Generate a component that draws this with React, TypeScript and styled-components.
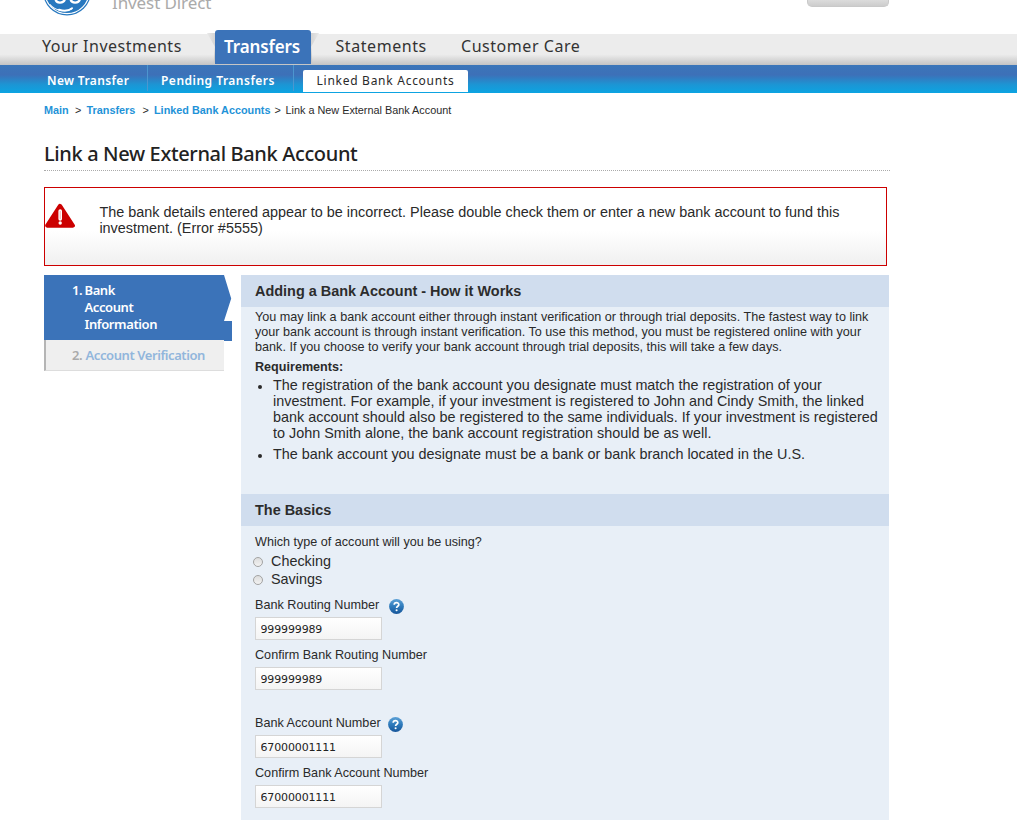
import React from "react";
import styled, { createGlobalStyle } from "styled-components";

const humanist = `"Noto Sans", "Open Sans", sans-serif`;
const grotesque = `"Liberation Sans", Arial, sans-serif`;

const GlobalStyle = createGlobalStyle`
  html, body { margin: 0; padding: 0; background: #fff; }
  body { height: 820px; overflow: hidden; font-family: ${grotesque}; color: #2a2a2a; }
  * { box-sizing: border-box; }
`;

const Page = styled.div`
  width: 1017px;
  height: 820px;
  overflow: hidden;
`;

const Masthead = styled.header`
  display: flex;
  justify-content: space-between;
  height: 34px;
  padding: 0 128px 0 43px;
`;

const Brand = styled.div`
  display: flex;
  gap: 21px;
  svg { display: block; flex: none; }
`;

const BrandName = styled.div`
  font: 400 17px/24px ${humanist};
  letter-spacing: -0.1px;
  color: #aaa;
  margin-top: -9px;
  white-space: nowrap;
`;

const HeaderButton = styled.div`
  width: 82px;
  height: 7px;
  background: linear-gradient(#dcdcdc, #cdcdcd);
  border: 1px solid #c9c9c9;
  border-top: 0;
  border-radius: 0 0 5px 5px;
`;

const MainNav = styled.nav`
  display: flex;
  height: 31px;
  padding-left: 42px;
  background: linear-gradient(#ececec 0 66%, #c4c4c4 100%);
`;

const MainLink = styled.a<{ $w: number; $pad?: number; $track: string }>`
  width: ${(p) => p.$w}px;
  padding-left: ${(p) => p.$pad ?? 0}px;
  font: 400 16px/25px ${humanist};
  letter-spacing: ${(p) => p.$track};
  color: #333;
  white-space: nowrap;
`;

const TabEar = styled.svg`
  display: block;
  flex: none;
  margin-top: -1px;
`;

const MainTab = styled.a`
  width: 96px;
  height: 34px;
  margin-top: -4px;
  padding-left: 9px;
  border-radius: 3px 3px 0 0;
  background: #3b73b9;
  color: #fff;
  font: 600 17px/33px ${humanist};
  letter-spacing: -0.1px;
  white-space: nowrap;
`;

const SubNav = styled.nav`
  display: flex;
  height: 28px;
  background: linear-gradient(#3b76b9 0%, #3d70b8 35%, #1c95d4 70%, #0ca4e2 100%);
`;

const SubLink = styled.a<{ $w: number; $pad: number; $track: string }>`
  width: ${(p) => p.$w}px;
  height: 26px;
  padding-left: ${(p) => p.$pad}px;
  border-right: 1px solid #4c96cf;
  color: #fff;
  font: 600 12px/32px ${humanist};
  letter-spacing: ${(p) => p.$track};
  white-space: nowrap;
`;

const SubTab = styled.a`
  width: 165px;
  height: 22px;
  margin: 5px 0 0 9px;
  background: #fff;
  border-radius: 2px 2px 0 0;
  text-align: center;
  font: 400 12px/22px ${humanist};
  letter-spacing: 0.73px;
  white-space: nowrap;
`;

const Content = styled.main`
  width: 846px;
  margin-left: 44px;
`;

const Breadcrumbs = styled.div`
  display: flex;
  height: 35px;
  font-size: 10.85px;
  line-height: 35px;
  white-space: nowrap;
`;

const Crumb = styled.a<{ $w: number }>`
  width: ${(p) => p.$w}px;
  color: #1f93d8;
  font-weight: 700;
`;

const CrumbMark = styled.span<{ $w: number }>`
  width: ${(p) => p.$w}px;
`;

const Title = styled.h1`
  margin: 0;
  height: 43px;
  border-bottom: 1px dotted #aaa;
  font: 500 20px/51px ${humanist};
  letter-spacing: -0.36px;
  color: #222;
  white-space: nowrap;
`;

const Alert = styled.div`
  display: flex;
  width: 843px;
  height: 79px;
  margin-top: 16px;
  padding-top: 15px;
  border: 1px solid #c00;
  background: linear-gradient(#fff 55%, #f0f0f0);
  svg { display: block; flex: none; }
`;

const AlertText = styled.div`
  margin: 1px 0 0 24.4px;
  font-size: 14.42px;
  line-height: 16px;
`;

const Line = styled.div`
  white-space: nowrap;
`;

const Columns = styled.div`
  display: flex;
  margin-top: 9px;
`;

const Steps = styled.aside`
  width: 197px;
`;

const CurrentStep = styled.div`
  position: relative;
  display: flex;
  width: 180px;
  height: 65px;
  padding: 7px 0 0 28px;
  background: #3b73b9;
  color: #fff;
  font: 600 13px/17px ${humanist};
  letter-spacing: -0.4px;
`;

const StepArrow = styled.svg`
  position: absolute;
  left: 180px;
  top: 0;
`;

const NextStep = styled.div`
  display: flex;
  width: 180px;
  height: 31px;
  padding-left: 26px;
  border-left: 2px solid #b5b5b5;
  border-bottom: 1px solid #ddd;
  background: #efefef;
  color: #92b6dc;
  font: 600 13px/31px ${humanist};
  letter-spacing: -0.42px;
  white-space: nowrap;
`;

const StepNumber = styled.span<{ $w: number; $color: string }>`
  width: ${(p) => p.$w}px;
  color: ${(p) => p.$color};
`;

const Panel = styled.section`
  width: 648px;
  height: 545px;
  background: #e8eff7;
`;

const PanelTitle = styled.h2`
  margin: 0;
  height: 32px;
  padding-left: 14px;
  background: #d0ddee;
  font-size: 14.45px;
  line-height: 32px;
  font-weight: 700;
  color: #2c2c2c;
`;

const HowItWorks = styled.div`
  height: 187px;
  padding: 3px 0 0 14px;
`;

const Intro = styled.div`
  font-size: 12.63px;
  line-height: 15px;
`;

const Requirements = styled.div`
  margin-top: 5px;
  font-size: 12.6px;
  line-height: 15px;
  font-weight: 700;
`;

const Bullets = styled.ul`
  margin: 2px 0 0;
  padding: 0;
  list-style: none;
`;

const Bullet = styled.li`
  display: flex;
  margin-bottom: 5px;
  font-size: 14.4px;
  line-height: 16px;
  &::before {
    content: "";
    flex: none;
    width: 4px;
    height: 4px;
    margin: 8px 11px 0 3px;
    border-radius: 50%;
    background: #2a2a2a;
  }
`;

const Form = styled.form`
  padding: 8px 0 0 14px;
`;

const Question = styled.div`
  height: 18px;
  font-size: 12.6px;
  line-height: 16px;
`;

const Option = styled.label`
  display: flex;
  align-items: center;
  height: 18px;
  margin-left: -2px;
  font-size: 14.4px;
`;

const Radio = styled.span`
  width: 10px;
  height: 10px;
  margin: 2px 8px 0 0;
  border: 1px solid #a3a3a3;
  border-radius: 50%;
  background: linear-gradient(#ddd, #f2f2f2);
`;

const Field = styled.div<{ $top: number }>`
  margin-top: ${(p) => p.$top}px;
`;

const Label = styled.div<{ $gap: number }>`
  display: flex;
  height: 20px;
  gap: ${(p) => p.$gap}px;
  font-size: 12.63px;
  line-height: 16px;
  svg { flex: none; margin-top: 1.5px; }
`;

const Input = styled.input`
  display: block;
  width: 127px;
  height: 23px;
  padding: 1px 0 0 4.5px;
  border: 1px solid #d5d5d5;
  border-radius: 0;
  outline: 0;
  background: linear-gradient(#fff, #f4f4f4);
  font: 11px "DejaVu Sans", sans-serif;
  letter-spacing: -0.14px;
  color: #222;
`;

const HelpIcon = () => (
  <svg width="15" height="15" viewBox="0 0 15 15">
    <defs>
      <linearGradient id="help" x1="0" y1="0" x2="0" y2="1">
        <stop offset="0" stopColor="#5ba0d6" />
        <stop offset=".5" stopColor="#2e7abb" />
        <stop offset="1" stopColor="#17569a" />
      </linearGradient>
    </defs>
    <circle cx="7.5" cy="7.5" r="7.4" fill="url(#help)" />
    <path d="M5.2 5.8C5.2 3 9.8 3 9.8 5.7c0 1.5-2.2 1.6-2.2 3.2" fill="none" stroke="#fff" strokeWidth="1.7" />
    <circle cx="7.6" cy="11.2" r="1.05" fill="#fff" />
  </svg>
);

const Logo = () => (
  <svg width="48" height="16" viewBox="0 0 48 16">
    <circle cx="24" cy="-8.5" r="24" fill="#2778bf" />
    <circle cx="24" cy="-8.5" r="22.2" fill="none" stroke="#fff" strokeWidth="1.2" />
    <g fill="none" stroke="#fff" strokeLinecap="round">
      <path d="M12.5-1c.5 4.5 8 5 9.5 0M27.5-1c1 5 8.5 4.5 9.5 0" strokeWidth="2.3" />
      <path d="M7 4.5c4 5 13 8 21.5 4.5" strokeWidth="1.1" />
      <path d="M16 9.7c5 1.5 10 1 13-1.500" strokeWidth="2" />
    </g>
  </svg>
);

const Ear = ({ flip }: { flip?: boolean }) => (
  <TabEar width="8" height="32" viewBox="0 0 8 32">
    <defs>
      <linearGradient id={flip ? "earRight" : "earLeft"} x1={flip ? 1 : 0} x2={flip ? 0 : 1} y1="0" y2="0">
        <stop offset="0" stopColor="#e9e9e9" />
        <stop offset="1" stopColor="#d4d4d4" />
      </linearGradient>
    </defs>
    <path
      d={flip ? "M8 0L0 14V0z" : "M0 0L8 14V0z"}
      fill={flip ? "url(#earRight)" : "url(#earLeft)"}
    />
    <path d={flip ? "M0 12v20h1.5z" : "M8 12v20H6.5z"} fill="#c8c8c8" />
  </TabEar>
);

const WarningIcon = () => (
  <svg width="30" height="26" viewBox="0 0 30 26">
    <path d="M15 3L27.8 22.6H2.2z" fill="#c00" stroke="#c00" strokeWidth="4.2" strokeLinejoin="round" />
    <path d="M15.2 8v8" stroke="#fff" strokeWidth="3.6" strokeLinecap="round" />
    <path d="M15.2 8.3v7.4" stroke="#c00" strokeWidth="1" strokeLinecap="round" opacity=".3" />
    <circle cx="15.2" cy="20" r="1.7" fill="#fff" />
  </svg>
);

interface FieldProps {
  label: string;
  value: string;
  top: number;
  help?: boolean;
  gap?: number;
}

const TextField = ({ label, value, top, help, gap = 0 }: FieldProps) => (
  <Field $top={top}>
    <Label $gap={gap}>
      <Line>{label}</Line>
      {help && <HelpIcon />}
    </Label>
    <Input defaultValue={value} aria-label={label} />
  </Field>
);

export default function App() {
  return (
    <Page>
      <GlobalStyle />
      <Masthead>
        <Brand>
          <Logo />
          <BrandName>Invest Direct</BrandName>
        </Brand>
        <HeaderButton />
      </Masthead>
      <MainNav>
        <MainLink $w={165} $track="0.5px">Your Investments</MainLink>
        <Ear />
        <MainTab>Transfers</MainTab>
        <Ear flip />
        <MainLink $w={142} $pad={16.5} $track="0.57px">Statements</MainLink>
        <MainLink $w={130} $track="0.54px">Customer Care</MainLink>
      </MainNav>
      <SubNav>
        <SubLink $w={148} $pad={47} $track="0.37px">New Transfer</SubLink>
        <SubLink $w={146} $pad={13} $track="0.49px">Pending Transfers</SubLink>
        <SubTab>Linked Bank Accounts</SubTab>
      </SubNav>
      <Content>
        <Breadcrumbs>
          <Crumb $w={31}>Main</Crumb>
          <CrumbMark $w={11.5}>&gt;</CrumbMark>
          <Crumb $w={56}>Transfers</Crumb>
          <CrumbMark $w={11.5}>&gt;</CrumbMark>
          <Crumb $w={120.5}>Linked Bank Accounts</Crumb>
          <CrumbMark $w={11}>&gt;</CrumbMark>
          <span>Link a New External Bank Account</span>
        </Breadcrumbs>
        <Title>Link a New External Bank Account</Title>
        <Alert>
          <WarningIcon />
          <AlertText>
            <Line>The bank details entered appear to be incorrect. Please double check them or enter a new bank account to fund this</Line>
            <Line>investment. (Error #5555)</Line>
          </AlertText>
        </Alert>
        <Columns>
          <Steps>
            <CurrentStep>
              <StepNumber $w={12.5} $color="#fff">1.</StepNumber>
              <div>
                <Line>Bank</Line>
                <Line>Account</Line>
                <Line>Information</Line>
              </div>
              <StepArrow width="8" height="66" viewBox="0 0 8 66">
                <path d="M0 0L7.2 23.5 0 46H8V66H0z" fill="#3b73b9" />
              </StepArrow>
            </CurrentStep>
            <NextStep>
              <StepNumber $w={13.5} $color="#aaa">2.</StepNumber>
              <Line>Account Verification</Line>
            </NextStep>
          </Steps>
          <Panel>
            <PanelTitle>Adding a Bank Account - How it Works</PanelTitle>
            <HowItWorks>
              <Intro>
                <Line>You may link a bank account either through instant verification or through trial deposits. The fastest way to link</Line>
                <Line>your bank account is through instant verification. To use this method, you must be registered online with your</Line>
                <Line>bank. If you choose to verify your bank account through trial deposits, this will take a few days.</Line>
              </Intro>
              <Requirements>Requirements:</Requirements>
              <Bullets>
                <Bullet>
                  <div>
                    <Line>The registration of the bank account you designate must match the registration of your</Line>
                    <Line>investment. For example, if your investment is registered to John and Cindy Smith, the linked</Line>
                    <Line>bank account should also be registered to the same individuals. If your investment is registered</Line>
                    <Line>to John Smith alone, the bank account registration should be as well.</Line>
                  </div>
                </Bullet>
                <Bullet>
                  <Line>The bank account you designate must be a bank or bank branch located in the U.S.</Line>
                </Bullet>
              </Bullets>
            </HowItWorks>
            <PanelTitle>The Basics</PanelTitle>
            <Form>
              <Question><Line>Which type of account will you be using?</Line></Question>
              <Option><Radio />Checking</Option>
              <Option><Radio />Savings</Option>
              <TextField label="Bank Routing Number" value="999999989" top={9} help gap={10} />
              <TextField label="Confirm Bank Routing Number" value="999999989" top={7} />
              <TextField label="Bank Account Number" value="67000001111" top={25} help gap={7} />
              <TextField label="Confirm Bank Account Number" value="67000001111" top={7} />
            </Form>
          </Panel>
        </Columns>
      </Content>
    </Page>
  );
}
